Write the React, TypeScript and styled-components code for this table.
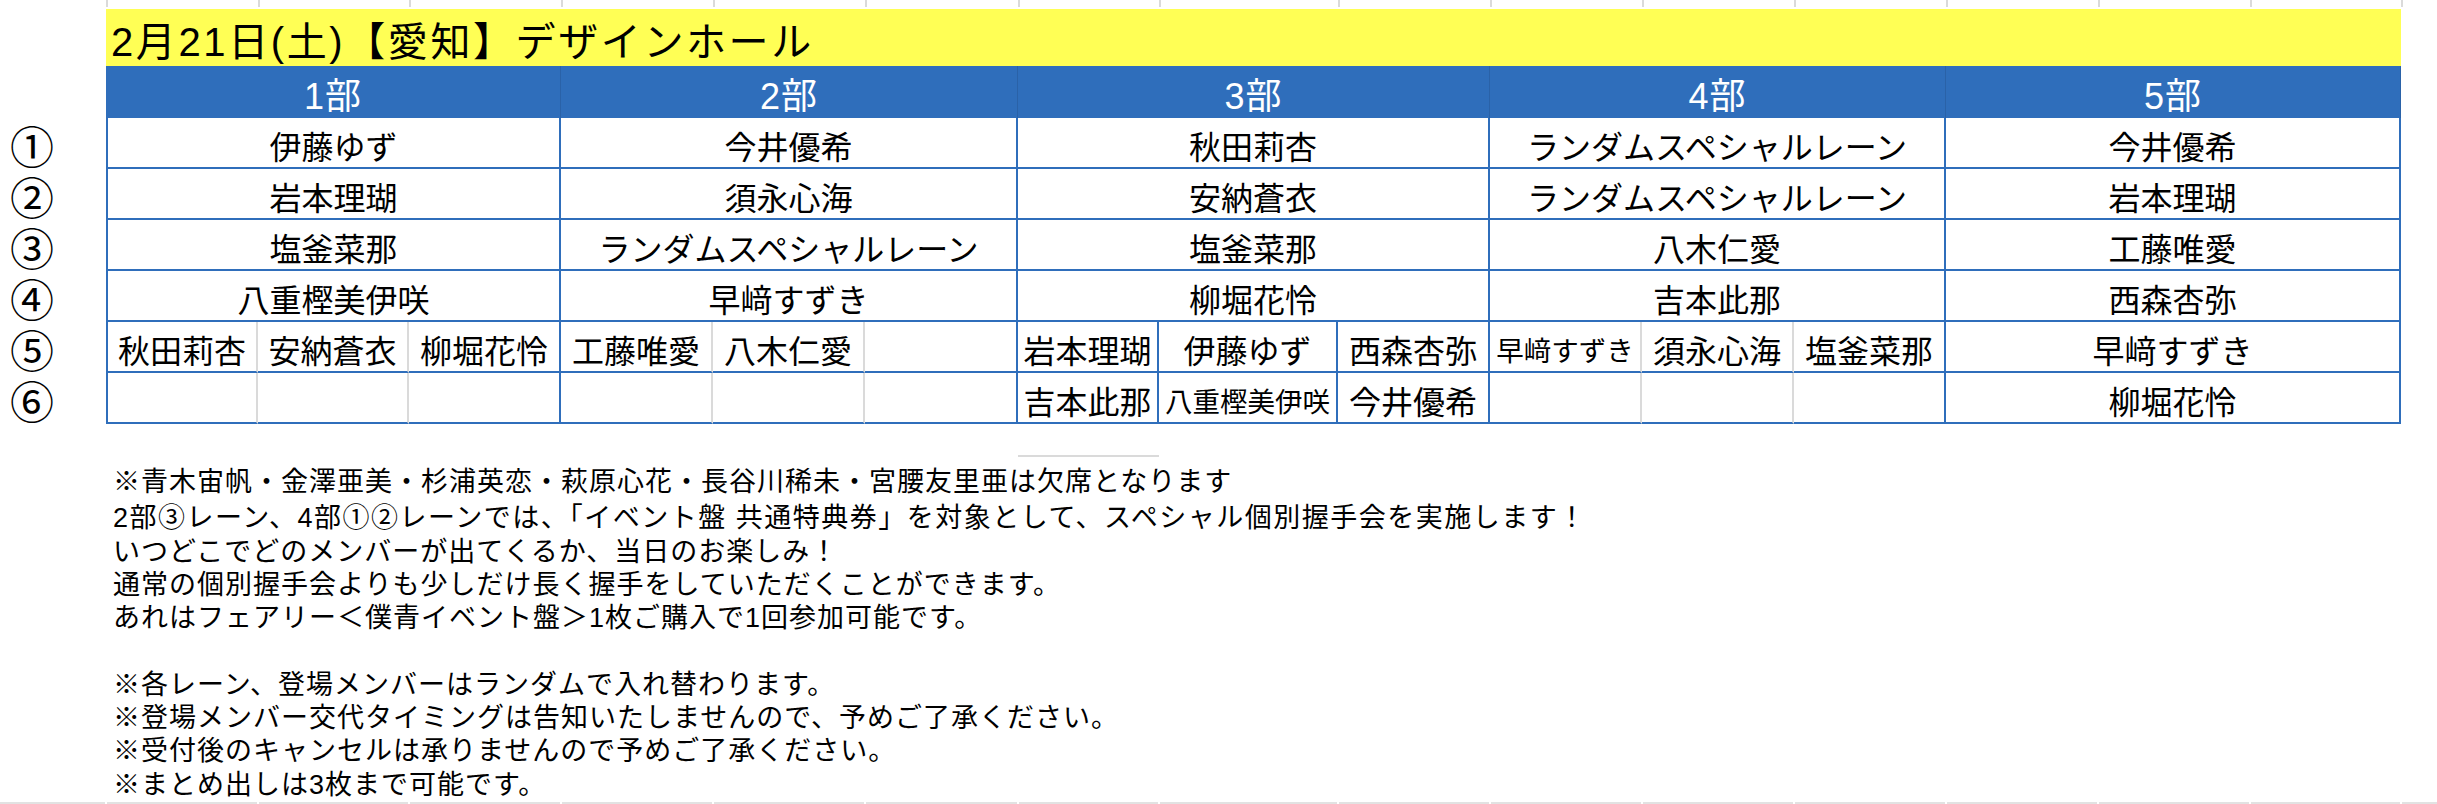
import React from 'react'
import styled, { createGlobalStyle } from 'styled-components'

const BLUE = '#2f6ebb'
const GRID = '#dadada'
const YELLOW = '#ffff55'

// spreadsheet column widths (px), three per 部
const COLUMNS = [152, 151, 152, 152, 152, 153, 141, 179, 152, 152, 152, 152, 152, 152, 151]
const TEMPLATE = `106px ${COLUMNS.map((w) => `${w}px`).join(' ')}`

const GlobalStyle = createGlobalStyle`
  html, body {
    margin: 0;
    padding: 0;
    background: #fff;
  }
  body {
    width: 2437px;
    height: 804px;
    overflow: hidden;
    font-family: 'Liberation Sans', 'Noto Sans CJK JP', sans-serif;
    color: #000;
  }
`

const Page = styled.div`
  display: flex;
  flex-direction: column;
  height: 804px;
`

const Sheet = styled.div`
  display: grid;
  grid-template-columns: ${TEMPLATE};
  grid-template-rows: 9px 57px 52px repeat(6, 51px) 33px;
`

const TopLine = styled.div<{ $last?: boolean }>`
  height: 7px;
  border-left: 2px solid ${GRID};
  border-right: ${(p) => (p.$last ? `2px solid ${GRID}` : 'none')};
  margin-right: ${(p) => (p.$last ? '-2px' : '0')};
`

const Title = styled.div`
  grid-column: 2 / span 15;
  background: ${YELLOW};
  display: flex;
  align-items: center;
  padding: 9px 0 0 5px;
  font-size: 40px;
  letter-spacing: 2.6px;
  line-height: 1;
  white-space: nowrap;
`

const Header = styled.div`
  grid-column: span 3;
  background: ${BLUE};
  color: #fff;
  display: flex;
  align-items: center;
  justify-content: center;
  padding-top: 9px;
  font-size: 36px;
  letter-spacing: 1px;
  line-height: 1;
  border-right: 1px solid rgba(0, 0, 0, 0.1);

  &:last-child {
    border-right: none;
  }
`

const Lane = styled.div`
  grid-column: 1;
  display: flex;
  align-items: center;
  padding: 10px 0 0 10px;
  font-size: 44px;
  line-height: 1;
`

const Cell = styled.div<{ $span: number; $edge: 'blue' | 'gray'; $first?: boolean; $size?: number }>`
  grid-column: span ${(p) => p.$span};
  display: flex;
  align-items: center;
  justify-content: center;
  padding-top: 10px;
  box-sizing: border-box;
  border-bottom: 2px solid ${BLUE};
  border-right: 2px solid ${(p) => (p.$edge === 'blue' ? BLUE : GRID)};
  border-left: ${(p) => (p.$first ? `2px solid ${BLUE}` : 'none')};
  font-size: ${(p) => p.$size ?? 32}px;
  line-height: 1;
  white-space: nowrap;
  overflow: hidden;
`

const Stub = styled.div<{ $col: number }>`
  grid-column: ${(p) => p.$col};
  border-bottom: 2px solid ${GRID};
`

const Notes = styled.div`
  flex: 1;
  padding: 9px 0 0 113px;
  font-size: 27px;
  white-space: nowrap;
`

const NoteLine = styled.div<{ $gap?: number; $spread?: number }>`
  height: 33.3px;
  line-height: 33.3px;
  margin-top: ${(p) => p.$gap ?? 0}px;
  letter-spacing: ${(p) => p.$spread ?? 1}px;
`

const BottomStrip = styled.div`
  display: grid;
  grid-template-columns: 105px ${COLUMNS.map((w) => `${w}px`).join(' ')} 1fr;
  height: 3px;
`

const StripCell = styled.div`
  background: #e2e2e2;
  border-left: 2px solid #fff;

  &:first-child {
    border-left: none;
  }
`

type Slot = string | [string, number]
type Entry = Slot | Slot[]

const LANES = ['①', '②', '③', '④', '⑤', '⑥']

const ROWS: Entry[][] = [
  ['伊藤ゆず', '今井優希', '秋田莉杏', 'ランダムスペシャルレーン', '今井優希'],
  ['岩本理瑚', '須永心海', '安納蒼衣', 'ランダムスペシャルレーン', '岩本理瑚'],
  ['塩釜菜那', 'ランダムスペシャルレーン', '塩釜菜那', '八木仁愛', '工藤唯愛'],
  ['八重樫美伊咲', '早﨑すずき', '柳堀花怜', '吉本此那', '西森杏弥'],
  [
    ['秋田莉杏', '安納蒼衣', '柳堀花怜'],
    ['工藤唯愛', '八木仁愛', ''],
    ['岩本理瑚', '伊藤ゆず', '西森杏弥'],
    [['早﨑すずき', 27.5], '須永心海', '塩釜菜那'],
    '早﨑すずき',
  ],
  [
    ['', '', ''],
    ['', '', ''],
    ['吉本此那', ['八重樫美伊咲', 27.5], '今井優希'],
    ['', '', ''],
    '柳堀花怜',
  ],
]

function slotText(slot: Slot) {
  return typeof slot === 'string' ? slot : slot[0]
}

function slotSize(slot: Slot) {
  return typeof slot === 'string' ? undefined : slot[1]
}

function LaneRow({ lane, entries }: { lane: string; entries: Entry[] }) {
  const cells: React.ReactNode[] = []
  entries.forEach((entry, part) => {
    const first = part === 0
    if (Array.isArray(entry)) {
      // split lanes: 3部 keeps blue rules inside, the others use sheet grid lines
      entry.forEach((slot, i) => {
        const edge = i === 2 || part === 2 ? 'blue' : 'gray'
        cells.push(
          <Cell key={`${part}-${i}`} $span={1} $edge={edge} $first={first && i === 0} $size={slotSize(slot)}>
            {slotText(slot)}
          </Cell>,
        )
      })
    } else {
      cells.push(
        <Cell key={part} $span={3} $edge="blue" $first={first} $size={slotSize(entry)}>
          {slotText(entry)}
        </Cell>,
      )
    }
  })

  return (
    <>
      <Lane>{lane}</Lane>
      {cells}
    </>
  )
}

export default function App() {
  return (
    <Page>
      <GlobalStyle />
      <Sheet>
        <div />
        {COLUMNS.map((_, i) => (
          <TopLine key={i} $last={i === COLUMNS.length - 1} />
        ))}

        <div />
        <Title>2月21日(土)【愛知】デザインホール</Title>

        <div />
        {['1部', '2部', '3部', '4部', '5部'].map((name) => (
          <Header key={name}>{name}</Header>
        ))}

        {ROWS.map((entries, i) => (
          <LaneRow key={LANES[i]} lane={LANES[i]} entries={entries} />
        ))}

        <Stub $col={8} />
      </Sheet>

      <Notes>
        <NoteLine>※青木宙帆・金澤亜美・杉浦英恋・萩原心花・長谷川稀未・宮腰友里亜は欠席となります</NoteLine>
        <NoteLine $gap={3} $spread={1.5}>
          2部③レーン、4部①②レーンでは、「イベント盤 共通特典券」を対象として、スペシャル個別握手会を実施します！
        </NoteLine>
        <NoteLine>いつどこでどのメンバーが出てくるか、当日のお楽しみ！</NoteLine>
        <NoteLine>通常の個別握手会よりも少しだけ長く握手をしていただくことができます。</NoteLine>
        <NoteLine>あれはフェアリー＜僕青イベント盤＞1枚ご購入で1回参加可能です。</NoteLine>
        <NoteLine />
        <NoteLine>※各レーン、登場メンバーはランダムで入れ替わります。</NoteLine>
        <NoteLine>※登場メンバー交代タイミングは告知いたしませんので、予めご了承ください。</NoteLine>
        <NoteLine>※受付後のキャンセルは承りませんので予めご了承ください。</NoteLine>
        <NoteLine>※まとめ出しは3枚まで可能です。</NoteLine>
      </Notes>

      <BottomStrip>
        <StripCell />
        {COLUMNS.map((_, i) => (
          <StripCell key={i} />
        ))}
        <StripCell />
      </BottomStrip>
    </Page>
  )
}
